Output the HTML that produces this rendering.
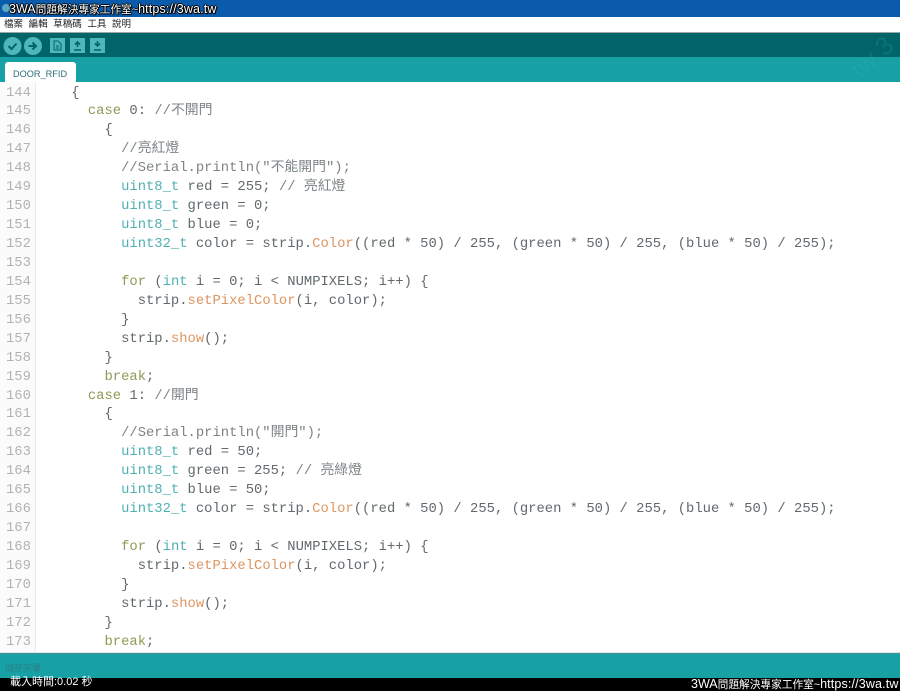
<!DOCTYPE html>
<html><head><meta charset="utf-8"><style>
html,body{margin:0;padding:0;width:900px;height:691px;overflow:hidden;background:#fff;font-family:"Liberation Sans","Noto Sans CJK TC",sans-serif}
.a{position:absolute}
.o{color:#fff;text-shadow:1px 1px 0 #000,-1px 0 0 #000,0 -1px 0 #000,1px 0 0 #000,0 1px 0 #000}
.l{letter-spacing:.15px}
#code,#nums{position:absolute;top:83.5px;margin:0;font:13.85px/18.93px "Liberation Mono","Noto Sans CJK TC",monospace;color:#62696d;white-space:pre}
#code{left:38px}
#nums{left:6px;color:#b0b3b4}
.k{color:#8f9a55}.t{color:#4fb0b3}.f{color:#dc9560}.c{color:#7d8487}
</style></head><body>
<div class="a" style="left:0;top:0;width:900px;height:17px;background:#0a5bab"></div>
<div class="a" style="left:2px;top:4px;width:8px;height:8px;border-radius:50%;background:#5aa9c0"></div>
<div class="a o" style="left:9px;top:1px;font-size:10.700px;line-height:16px;white-space:nowrap"><span style="font-size:12.500px">3WA</span>問題解決專家工作室~<span class="l" style="font-size:12.500px">https://3wa.tw</span></div>
<div class="a" style="left:0;top:17px;width:900px;height:15px;background:#fff"></div>
<div class="a" style="left:4px;top:18px;font-size:9.500px;line-height:14px;color:#222;word-spacing:3px;white-space:nowrap">檔案 編輯 草稿碼 工具 說明</div>
<div class="a" style="left:0;top:32px;width:900px;height:1px;background:#9aa8aa"></div>
<div class="a" style="left:0;top:33px;width:900px;height:24px;background:#006468"></div>
<div class="a" style="left:0;top:57px;width:900px;height:25px;background:#17a1a5"></div>
<div class="a" style="left:848px;top:42px;font-size:26px;line-height:30px;color:#3fb5b8;opacity:.18;transform:rotate(-42deg);white-space:nowrap">tw 3</div>
<svg class="a" style="left:0;top:33px" width="120" height="25" viewBox="0 0 120 25">
<circle cx="12.500" cy="13" r="9" fill="#4db7ba"/><circle cx="33" cy="13" r="9" fill="#4db7ba"/>
<path d="M8.500 13l3 3 5-5.500" fill="none" stroke="#006468" stroke-width="2"/>
<path d="M28.500 13h7M32.500 9.500l3.500 3.500-3.500 3.500" fill="none" stroke="#006468" stroke-width="2"/>
<rect x="50" y="5" width="15" height="15" fill="#4db7ba"/><rect x="70" y="5" width="15" height="15" fill="#4db7ba"/><rect x="90" y="5" width="15" height="15" fill="#4db7ba"/>
<path d="M54 8h4l3 3v6h-7zM56 13h3M56 15h3" fill="none" stroke="#006468" stroke-width="1"/>
<path d="M77.500 14V9M75 11.500l2.500-2.500 2.500 2.500M74 17h7" fill="none" stroke="#006468" stroke-width="1.600"/>
<path d="M97.500 8v5M95 10.500l2.500 2.500 2.500-2.500M94 17h7" fill="none" stroke="#006468" stroke-width="1.600"/>
</svg>
<div class="a" style="left:5px;top:62px;width:71px;height:20px;background:#fff;border-radius:3px 3px 0 0"></div>
<div class="a" style="left:13px;top:67px;font-size:9.200px;line-height:14px;color:#2c6f73">DOOR_RFID</div>
<div class="a" style="left:0;top:82px;width:35px;height:570px;background:#fbfbfb;border-right:1px solid #ececec"></div>
<pre id="nums">144
145
146
147
148
149
150
151
152
153
154
155
156
157
158
159
160
161
162
163
164
165
166
167
168
169
170
171
172
173</pre>
<pre id="code">    {
      <span class="k">case</span> 0: <span class="c">//不開門</span>
        {
          <span class="c">//亮紅燈</span>
          <span class="c">//Serial.println("不能開門");</span>
          <span class="t">uint8_t</span> red = 255; <span class="c">// 亮紅燈</span>
          <span class="t">uint8_t</span> green = 0;
          <span class="t">uint8_t</span> blue = 0;
          <span class="t">uint32_t</span> color = strip.<span class="f">Color</span>((red * 50) / 255, (green * 50) / 255, (blue * 50) / 255);

          <span class="k">for</span> (<span class="t">int</span> i = 0; i &lt; NUMPIXELS; i++) {
            strip.<span class="f">setPixelColor</span>(i, color);
          }
          strip.<span class="f">show</span>();
        }
        <span class="k">break</span>;
      <span class="k">case</span> 1: <span class="c">//開門</span>
        {
          <span class="c">//Serial.println("開門");</span>
          <span class="t">uint8_t</span> red = 50;
          <span class="t">uint8_t</span> green = 255; <span class="c">// 亮綠燈</span>
          <span class="t">uint8_t</span> blue = 50;
          <span class="t">uint32_t</span> color = strip.<span class="f">Color</span>((red * 50) / 255, (green * 50) / 255, (blue * 50) / 255);

          <span class="k">for</span> (<span class="t">int</span> i = 0; i &lt; NUMPIXELS; i++) {
            strip.<span class="f">setPixelColor</span>(i, color);
          }
          strip.<span class="f">show</span>();
        }
        <span class="k">break</span>;</pre>
<div class="a" style="left:0;top:652px;width:900px;height:1px;background:#d5e8ea"></div>
<div class="a" style="left:0;top:653px;width:900px;height:25px;background:#17a1a5;border-top:1px solid #4f8f92;box-sizing:border-box"></div>
<div class="a" style="left:5px;top:661px;font-size:9px;line-height:14px;color:#2b7f86">儲存完畢</div>
<div class="a" style="left:0;top:678px;width:900px;height:13px;background:#000"></div>
<div class="a" style="left:10px;top:675px;font-size:11px;line-height:14px;color:#fff;white-space:nowrap">載入時間:0.02 秒</div>
<div class="a" style="left:691px;top:677px;font-size:10.700px;line-height:15px;color:#fff;white-space:nowrap"><span style="font-size:12.500px">3WA</span>問題解決專家工作室~<span class="l" style="font-size:12.500px">https://3wa.tw</span></div>
</body></html>
